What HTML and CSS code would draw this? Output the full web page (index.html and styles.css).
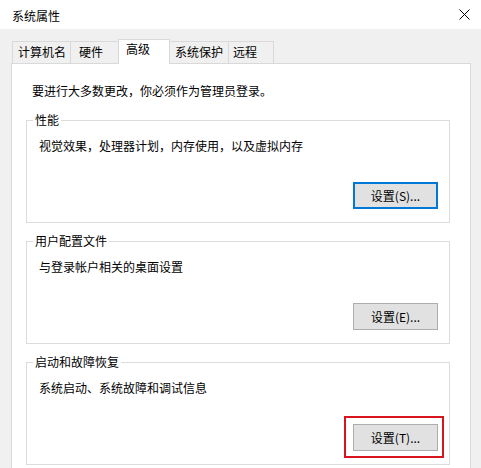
FILE: index.html
```html
<!DOCTYPE html>
<html lang="zh-CN">
<head>
<meta charset="utf-8">
<title>系统属性</title>
<link rel="stylesheet" href="styles.css">
</head>
<body>
<div class="window">
  <div class="titlebar">
    <span class="title">系统属性</span>
    <svg class="close" width="11" height="11" viewBox="0 0 11 11"><path d="M0.5 0.5 L10.5 10.5 M10.5 0.5 L0.5 10.5" stroke="#000" stroke-width="1" fill="none"/></svg>
  </div>
  <div class="main">
    <div class="tabs">
      <div class="tab t1">计算机名</div>
      <div class="tab t2">硬件</div>
      <div class="tab t3 active">高级</div>
      <div class="tab t4">系统保护</div>
      <div class="tab t5">远程</div>
    </div>
    <div class="panel">
      <p class="intro">要进行大多数更改，你必须作为管理员登录。</p>
      <fieldset class="group">
        <legend>性能</legend>
        <p class="desc">视觉效果，处理器计划，内存使用，以及虚拟内存</p>
        <div class="btnrow"><button class="btn focus">设置(S)...</button></div>
      </fieldset>
      <fieldset class="group">
        <legend>用户配置文件</legend>
        <p class="desc">与登录帐户相关的桌面设置</p>
        <div class="btnrow"><button class="btn">设置(E)...</button></div>
      </fieldset>
      <fieldset class="group">
        <legend>启动和故障恢复</legend>
        <p class="desc">系统启动、系统故障和调试信息</p>
        <div class="btnrow"><div class="marked"><button class="btn">设置(T)...</button><span class="mark"></span></div></div>
      </fieldset>
    </div>
  </div>
</div>
</body>
</html>
```

FILE: styles.css
```css
html, body {
  margin: 0;
  padding: 0;
}
body {
  width: 481px;
  height: 468px;
  overflow: hidden;
  background: #f0f0f0;
  font-family: "Noto Sans CJK SC", "Noto Sans", sans-serif;
  font-size: 12px;
  color: #000;
}
* { box-sizing: border-box; }
.titlebar {
  height: 29px;
  background: #fff;
  display: flex;
  align-items: center;
  justify-content: space-between;
  padding-left: 12px;
}
.title {
  line-height: 16px;
  padding-top: 2px;
}
.close {
  margin-right: 11px;
  display: block;
}
.main {
  padding: 10px 0 0 11px;
}
.tabs {
  display: flex;
  align-items: flex-end;
  height: 24px;
  padding-left: 1px;
}
.tab {
  height: 22px;
  border: 1px solid #d9d9d9;
  border-bottom: none;
  background: #f0f0f0;
  line-height: 16px;
  padding-top: 2px;
  margin-left: -1px;
  white-space: nowrap;
}
.tab.t1 { width: 59px; padding-left: 5px; margin-left: 0; }
.tab.t2 { width: 49px; padding-left: 8px; }
.tab.t3 { width: 52px; padding-left: 7px; }
.tab.t4 { width: 60px; padding-left: 5px; }
.tab.t5 { width: 46px; padding-left: 4px; }
.tab.active {
  height: 25px;
  margin-bottom: -1px;
  padding-top: 1px;
  background: #fff;
  position: relative;
  z-index: 1;
}
.panel {
  width: 460px;
  height: 420px;
  background: #fff;
  border: 1px solid #d9d9d9;
  padding: 0 20px 0 14px;
}
.intro {
  margin: 19px 0 0 6px;
  line-height: 16px;
}
.group {
  margin: 14px 0 0;
  padding: 11px 11px 13px 12px;
  border: 1px solid #dcdcdc;
  min-inline-size: 0;
}
.group + .group {
  margin-top: 11px;
}
.group legend {
  padding: 0 2px;
  margin-left: -6px;
  line-height: 14px;
  font-size: 12px;
}
.desc {
  margin: 0;
  line-height: 16px;
}
.btnrow {
  display: flex;
  justify-content: flex-end;
  margin-top: 28px;
}
.btn {
  width: 85px;
  height: 27px;
  border: 1px solid #adadad;
  background: #e1e1e1;
  font-family: "Noto Sans CJK SC", "Noto Sans", sans-serif;
  font-size: 12px;
  color: #000;
  padding: 0;
  line-height: 16px;
  display: block;
}
.btn.focus {
  border: 2px solid #0078d7;
}
.marked {
  position: relative;
}
.mark {
  position: absolute;
  left: -9px;
  top: -8px;
  width: 100px;
  height: 42px;
  border: 2px solid #d8141c;
}
```
